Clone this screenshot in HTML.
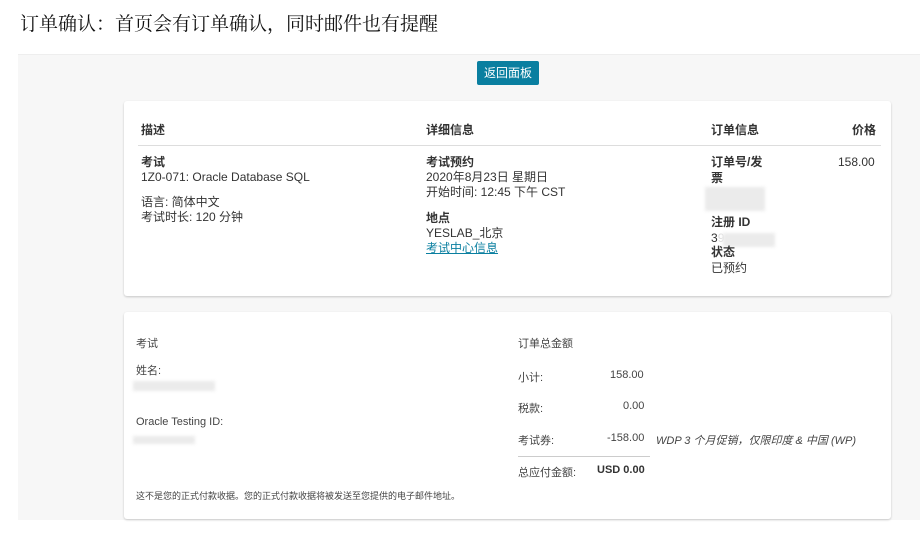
<!DOCTYPE html>
<html><head><meta charset="utf-8"><style>
*{margin:0;padding:0;box-sizing:border-box}
body{width:920px;height:534px;background:#fff;position:relative;overflow:hidden;font-family:"Liberation Sans","Noto Sans CJK SC",sans-serif;color:#333;font-size:12px}
.a{position:absolute;white-space:nowrap}
.title{font-family:"Liberation Serif","Noto Serif CJK SC",serif;font-size:19px;color:#111;left:20px;top:9px}
.bg{position:absolute;left:18px;top:54px;width:902px;height:466px;background:#f7f7f7;border-top:1px solid #eee}
.btn{left:477px;top:61px;width:62px;height:24px;background:#0a7fa0;color:#fff;border-radius:2px;text-align:center;line-height:24px;font-size:12px}
.card{position:absolute;left:124px;width:767px;background:#fff;border-radius:3px;box-shadow:0 1px 2px rgba(0,0,0,.2)}
b{font-weight:bold;color:#333}
.blur{position:absolute;background:#ebebeb;filter:blur(1.5px)}
.s{font-size:11px;color:#444}
</style></head><body>
<div class="a title">订单确认：首页会有订单确认，同时邮件也有提醒</div>
<div class="bg"></div>
<div class="a btn">返回面板</div>
<div class="card" style="top:101px;height:195px"></div>
<div class="a" style="left:138px;top:145px;width:743px;height:1px;background:#ddd"></div>
<div class="a" style="left:141px;top:121px"><b>描述</b></div>
<div class="a" style="left:426px;top:121px"><b>详细信息</b></div>
<div class="a" style="left:711px;top:121px"><b>订单信息</b></div>
<div class="a" style="left:852px;top:121px"><b>价格</b></div>
<div class="a" style="left:141px;top:155px;line-height:15px"><b>考试</b><br>1Z0-071: Oracle Database SQL</div>
<div class="a" style="left:141px;top:195px;line-height:15px">语言: 简体中文<br>考试时长: 120 分钟</div>
<div class="a" style="left:426px;top:155px;line-height:15px"><b>考试预约</b><br>2020年8月23日 星期日<br>开始时间: 12:45 下午 CST</div>
<div class="a" style="left:426px;top:211px;line-height:15px"><b>地点</b><br>YESLAB_北京<br><span style="color:#0a7fa0;text-decoration:underline">考试中心信息</span></div>
<div class="a" style="left:711px;top:155px;line-height:15.5px"><b>订单号/发<br>票</b></div>
<div class="blur" style="left:705px;top:187px;width:60px;height:24px"></div>
<div class="a" style="left:711px;top:215px;line-height:15.5px"><b>注册 ID</b><br>3<span style="color:#ddd">9</span></div>
<div class="blur" style="left:723px;top:233px;width:52px;height:14px"></div>
<div class="a" style="left:711px;top:245px;line-height:15.5px"><b>状态</b><br>已预约</div>
<div class="a" style="left:838px;top:155px">158.00</div>
<div class="card" style="top:312px;height:207px"></div>
<div class="a s" style="left:136px;top:335px">考试</div>
<div class="a s" style="left:136px;top:362px">姓名:</div>
<div class="blur" style="left:133px;top:381px;width:82px;height:10px"></div>
<div class="a s" style="left:136px;top:416px">Oracle Testing ID:</div>
<div class="blur" style="left:133px;top:436px;width:62px;height:8px"></div>
<div class="a" style="left:136px;top:489px;font-size:9px;color:#444">这不是您的正式付款收据。您的正式付款收据将被发送至您提供的电子邮件地址。</div>
<div class="a s" style="left:518px;top:335px">订单总金额</div>
<div class="a s" style="left:518px;top:369px">小计:</div><div class="a s" style="left:610px;top:369px">158.00</div>
<div class="a s" style="left:518px;top:400px">税款:</div><div class="a s" style="left:623px;top:400px">0.00</div>
<div class="a s" style="left:518px;top:432px">考试券:</div><div class="a s" style="left:607px;top:432px">-158.00</div>
<div class="a s" style="left:656px;top:432px;font-style:italic">WDP 3 个月促销，仅限印度 &amp; 中国 (WP)</div>
<div class="a" style="left:518px;top:456px;width:132px;height:1px;background:#ccc"></div>
<div class="a s" style="left:518px;top:464px">总应付金额:</div><div class="a s" style="left:597px;top:464px"><b>USD 0.00</b></div>
</body></html>
